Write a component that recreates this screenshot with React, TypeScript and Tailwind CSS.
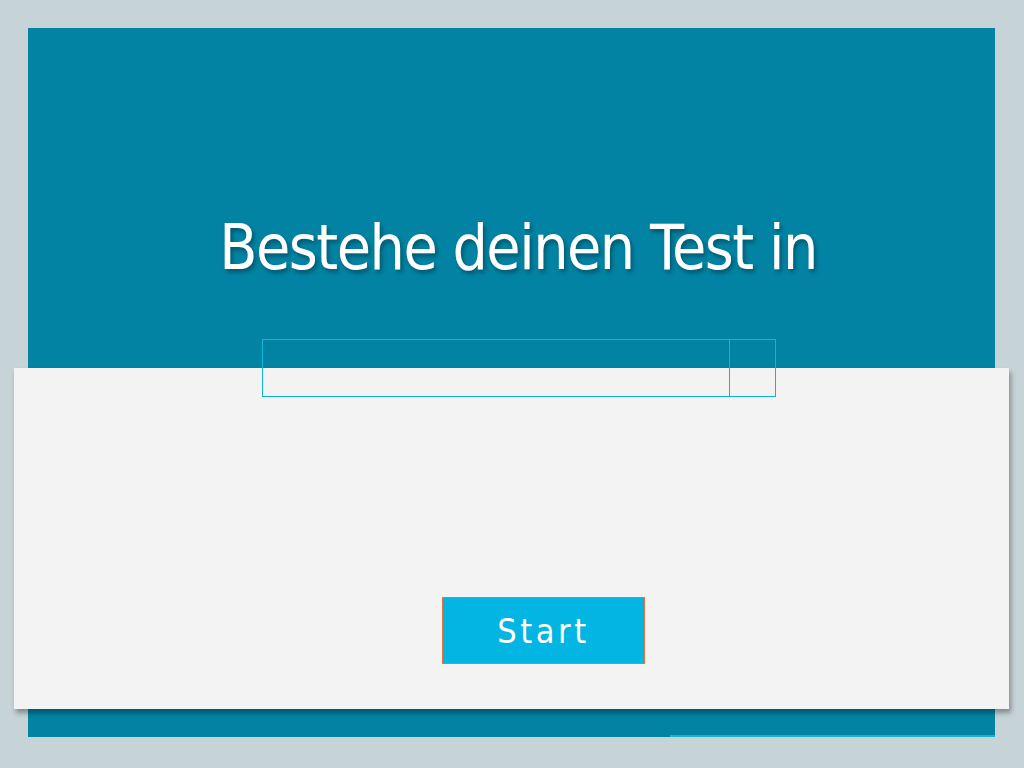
import React from "react";

export default function App() {
  return (
    <div
      className="w-[1024px] h-[768px] bg-[#c7d4d7] pt-[28px] px-[28px] overflow-hidden"
      style={{ fontFamily: "'DejaVu Sans Condensed', 'DejaVu Sans', sans-serif" }}
    >
      <div className="w-[967px] h-[709px] bg-[#0283a3] flex flex-col">
        <div className="h-[340px] flex justify-center pt-[180px] pl-[13px]">
          <h1 className="text-white text-[62px] leading-[80px] tracking-[-1.5px] [text-shadow:2px_3px_4px_rgba(0,0,0,0.35)]">
            Bestehe deinen Test in
          </h1>
        </div>
        <div className="-mx-[14px] h-[341px] bg-[#f3f3f3] shadow-[2px_4px_5px_rgba(0,0,0,0.35)] flex flex-col items-start relative">
          <div className="-mt-[29px] ml-[248px] w-[514px] h-[58px] border border-[#10b4da] flex">
            <div className="flex-1 border-r border-[#10b4da]" />
            <div className="w-[45px]" />
          </div>
          <button className="mt-[200px] ml-[428px] w-[203px] h-[67px] bg-[#03b5e2] border border-[#e8703a] text-white text-[34px] tracking-[3.6px] flex items-center justify-center pt-[2px]">
            Start
          </button>
        </div>
        <div className="flex-1 flex items-end justify-end">
          <div className="w-[325px] h-[2px] bg-[#12b4d8]" />
        </div>
      </div>
    </div>
  );
}
